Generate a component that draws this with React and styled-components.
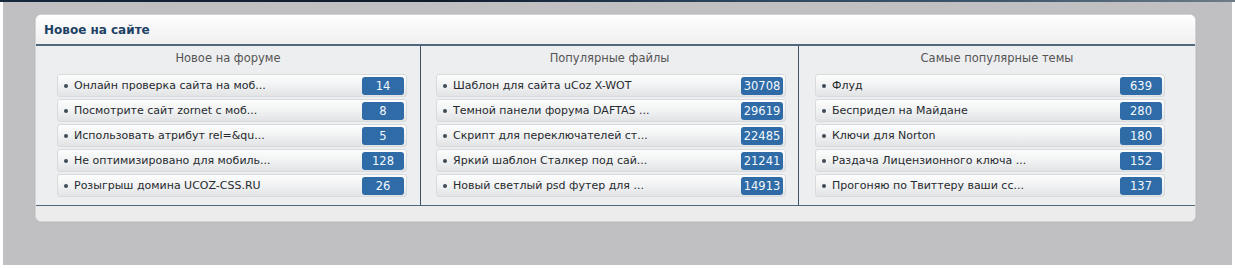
import styled, { createGlobalStyle } from 'styled-components'

const GlobalStyle = createGlobalStyle`
  html, body {
    margin: 0;
    padding: 0;
    background: #ffffff;
  }
  body {
    font-family: 'DejaVu Sans', 'Liberation Sans', sans-serif;
  }
`

// данные блоков
const columns = [
  {
    title: 'Новое на форуме',
    indent: 21,
    items: [
      ['Онлайн проверка сайта на моб...', 14],
      ['Посмотрите сайт zornet с моб...', 8],
      ['Использовать атрибут rel=&qu...', 5],
      ['Не оптимизировано для мобиль...', 128],
      ['Розыгрыш домина UCOZ-CSS.RU', 26],
    ],
  },
  {
    title: 'Популярные файлы',
    indent: 15,
    items: [
      ['Шаблон для сайта uCoz X-WOT', 30708],
      ['Темной панели форума DAFTAS ...', 29619],
      ['Скрипт для переключателей ст...', 22485],
      ['Яркий шаблон Сталкер под сай...', 21241],
      ['Новый светлый psd футер для ...', 14913],
    ],
  },
  {
    title: 'Самые популярные темы',
    indent: 16,
    items: [
      ['Флуд', 639],
      ['Беспридел на Майдане', 280],
      ['Ключи для Norton', 180],
      ['Раздача Лицензионного ключа ...', 152],
      ['Прогоняю по Твиттеру ваши сс...', 137],
    ],
  },
]

const App = () => {
  return (
    <>
      <GlobalStyle />
      <Screen>
        <TopStrip />
        <Page>
          <Panel>
            <PanelHeader>Новое на сайте</PanelHeader>
            <Columns>
              {columns.map((col, index) => (
                <Column key={index} $last={index === columns.length - 1}>
                  <ColumnTitle>{col.title}</ColumnTitle>
                  <List $indent={col.indent}>
                    {col.items.map(([text, count], i) => (
                      <Row key={i}>
                        <Bullet />
                        <RowText>{text}</RowText>
                        <Badge>{count}</Badge>
                      </Row>
                    ))}
                  </List>
                </Column>
              ))}
            </Columns>
            <PanelFooter />
          </Panel>
        </Page>
      </Screen>
    </>
  )
}

const Screen = styled.div`
  width: 1235px;
  height: 268px;
  background: #ffffff;
  display: flex;
  flex-direction: column;
`

const TopStrip = styled.div`
  height: 2px;
  flex-shrink: 0;
  background: linear-gradient(
    to right,
    #16283c 0%,
    #0e1b2b 35%,
    #2c4660 60%,
    #3d5569 80%,
    #6b7b88 100%
  );
`

const Page = styled.div`
  width: 1229px;
  height: 263px;
  margin-left: 3px;
  box-sizing: border-box;
  padding: 12px 0 0 32px;
  background: #c0c0c2;
`

const Panel = styled.div`
  width: 1161px;
  box-sizing: border-box;
  border: 1px solid #d3d4d6;
  border-radius: 6px;
  background: #edeef0;
  overflow: hidden;
  box-shadow: 0 0 1px rgba(0, 0, 0, 0.15);
`

const PanelHeader = styled.div`
  height: 28px;
  display: flex;
  align-items: center;
  padding-left: 8px;
  padding-top: 1px;
  background: linear-gradient(to bottom, #ffffff, #f1efef);
  border-bottom: 2px solid #4f687c;
  font-size: 12px;
  font-weight: bold;
  color: #1d4265;
`

const Columns = styled.div`
  display: grid;
  grid-template-columns: 385px 378px 1fr;
  border-bottom: 1px solid #4f687c;
`

const Column = styled.div`
  border-right: ${(props) => (props.$last ? 'none' : '1px solid #3b5267')};
  padding: 4px 0 8px;
`

const ColumnTitle = styled.div`
  text-align: center;
  font-size: 11.5px;
  line-height: 16px;
  color: #555555;
  margin-bottom: 8px;
`

const List = styled.div`
  display: flex;
  flex-direction: column;
  gap: 2px;
  padding-left: ${(props) => props.$indent}px;
`

const Row = styled.div`
  width: 350px;
  height: 23px;
  box-sizing: border-box;
  display: flex;
  align-items: center;
  padding: 0 2px 0 6px;
  border: 1px solid #d8dbde;
  border-radius: 3px;
  background: linear-gradient(to bottom, #fdfdfd 0%, #f1f2f3 50%, #e1e3e5 100%);
`

const Bullet = styled.span`
  width: 4px;
  height: 4px;
  border-radius: 50%;
  background: #3f4b56;
  flex-shrink: 0;
  margin-right: 6px;
`

const RowText = styled.span`
  flex: 1;
  font-size: 11px;
  color: #262a2e;
  white-space: nowrap;
  overflow: hidden;
`

const Badge = styled.span`
  width: 42px;
  height: 18px;
  flex-shrink: 0;
  display: flex;
  align-items: center;
  justify-content: center;
  border-radius: 3px;
  background: #2e6ba7;
  color: #f4f8fc;
  font-size: 11.5px;
`

const PanelFooter = styled.div`
  height: 15px;
  background: #ececec;
`

export default App
